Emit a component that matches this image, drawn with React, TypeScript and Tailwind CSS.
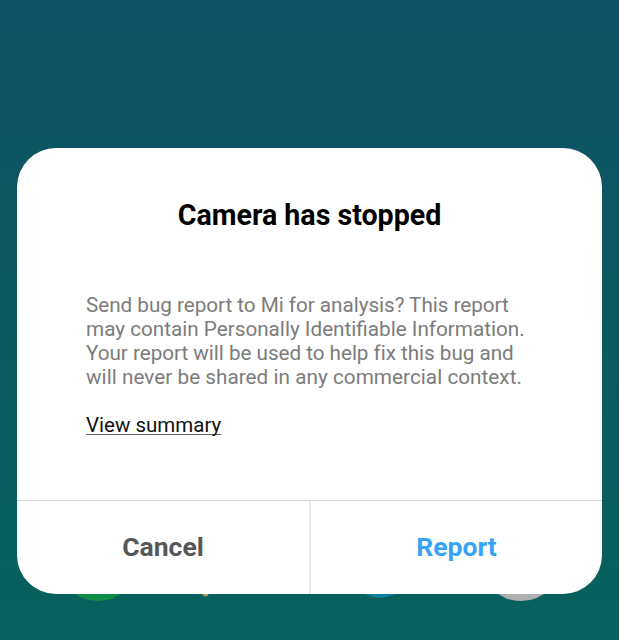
import React from "react";

export default function App() {
  return (
    <div className="relative h-[640px] w-full overflow-hidden bg-linear-to-b from-[#0f5165] to-[#07615c] px-[17px] pt-[147.5px] font-['Roboto',sans-serif]">
      {/* Home screen icons peeking out under the dialog */}
      <svg
        className="absolute bottom-0 left-0"
        width="619"
        height="120"
        viewBox="0 520 619 120"
        aria-hidden="true"
      >
        <circle cx="98" cy="560" r="41" fill="#118c47" />
        <circle cx="205.5" cy="593.5" r="3" fill="#b99a5c" />
        <circle cx="380.5" cy="561.5" r="36" fill="#0b83a4" />
        <circle cx="521" cy="560" r="41" fill="#afafaf" />
      </svg>

      {/* Dialog */}
      <div
        role="dialog"
        className="relative flex h-[446.5px] w-[585px] flex-col overflow-hidden rounded-[39px] bg-white"
      >
        <h1 className="pt-[51.5px] text-center text-[28.6px] leading-8 font-bold text-black">
          Camera has stopped
        </h1>

        <div className="flex-1 pt-[62px] pl-[69px] text-[20.7px] leading-6 text-[#7c7c7c]">
          <p className="whitespace-nowrap">
            <span className="block tracking-[-0.035px]">
              Send bug report to Mi for analysis? This report
            </span>
            <span className="block">
              may contain Personally Identifiable Information.
            </span>
            <span className="block tracking-[-0.035px]">
              Your report will be used to help fix this bug and
            </span>
            <span className="block tracking-[0.04px]">
              will never be shared in any commercial context.
            </span>
          </p>
          <a
            href="#"
            className="mt-6 inline-block text-[20.5px] text-[#111111] underline decoration-[#666666] decoration-1 underline-offset-2 [text-decoration-skip-ink:none]"
          >
            View summary
          </a>
        </div>

        {/* Actions */}
        <div className="flex h-[94px] border-t border-[#d6d6d6] text-[26.5px] font-bold">
          <button className="w-[294px] border-r-2 border-[#ebebeb] pb-[2px] text-[#575757]">
            Cancel
          </button>
          <button className="flex-1 pb-[2px] text-[#35a3f7]">Report</button>
        </div>
      </div>
    </div>
  );
}
